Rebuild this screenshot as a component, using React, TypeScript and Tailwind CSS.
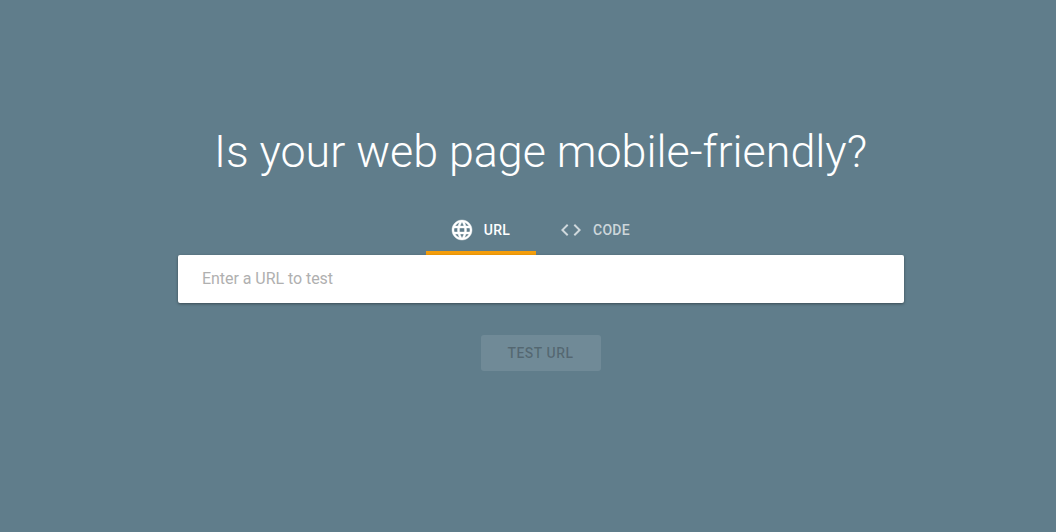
function GlobeIcon() {
  return (
    <svg viewBox="0 0 24 24" className="h-6 w-6 fill-white stroke-white stroke-[0.4]">
      <path d="M11.99 2C6.47 2 2 6.48 2 12s4.47 10 9.99 10C17.52 22 22 17.52 22 12S17.52 2 11.99 2zm6.93 6h-2.95c-.32-1.25-.78-2.45-1.38-3.56 1.84.63 3.37 1.91 4.33 3.56zM12 4.04c.83 1.2 1.48 2.53 1.91 3.96h-3.82c.43-1.43 1.08-2.76 1.91-3.96zM4.26 14C4.1 13.36 4 12.69 4 12s.1-1.36.26-2h3.38c-.08.66-.14 1.32-.14 2s.06 1.34.14 2H4.26zm.82 2h2.95c.32 1.25.78 2.45 1.38 3.56-1.84-.63-3.37-1.9-4.33-3.56zm2.95-8H5.08c.96-1.66 2.49-2.93 4.33-3.56C8.81 5.55 8.35 6.75 8.03 8zM12 19.96c-.83-1.2-1.48-2.53-1.91-3.96h3.82c-.43 1.43-1.08 2.76-1.91 3.96zM14.34 14H9.66c-.09-.66-.16-1.32-.16-2s.07-1.35.16-2h4.68c.09.65.16 1.32.16 2s-.07 1.34-.16 2zm.25 5.56c.6-1.11 1.06-2.31 1.38-3.56h2.95c-.96 1.65-2.49 2.93-4.33 3.56zM16.36 14c.08-.66.14-1.32.14-2s-.06-1.34-.14-2h3.38c.16.64.26 1.31.26 2s-.1 1.36-.26 2h-3.38z" />
    </svg>
  )
}

function CodeIcon() {
  return (
    <svg viewBox="0 0 24 24" className="h-6 w-6 fill-white/70">
      <path d="M9.4 16.6L4.8 12l4.6-4.6L8 6l-6 6 6 6 1.4-1.4zm5.2 0l4.6-4.6-4.6-4.6L16 6l6 6-6 6-1.4-1.4z" />
    </svg>
  )
}

export default function App() {
  return (
    <div className="h-[532px] w-full overflow-hidden bg-[#607d8b] pl-[26px] font-['Roboto',sans-serif]">
      <div className="flex flex-col items-center pt-[122px]">
        <h1 className="pr-[1px] text-[44.8px] leading-[60px] font-light text-white">Is your web page mobile-friendly?</h1>

        <div className="mt-[25px] flex h-12">
          <div className="flex w-[110px] items-center justify-center gap-[10px] border-b-4 border-[#f59e0b] pt-[2px] pr-[2px] text-sm font-medium tracking-[0.3px] text-white">
            <GlobeIcon />
            <span>URL</span>
          </div>
          <div className="flex w-[120px] items-center justify-center gap-[10px] border-b-4 border-transparent pt-[2px] pr-[3px] text-sm font-medium tracking-[0.3px] text-white/70">
            <CodeIcon />
            <span>CODE</span>
          </div>
        </div>

        <div className="flex h-12 w-[726px] items-center rounded-[2px] bg-white px-6 shadow-[0_1px_3px_rgba(0,0,0,0.4)]">
          <span className="text-base tracking-[-0.05px] text-[#b0b0b0]">Enter a URL to test</span>
        </div>

        <div className="mt-8 flex h-9 w-[120px] items-center justify-center rounded-[3px] bg-white/10 pr-[1px] pb-[1px] text-sm font-medium tracking-[0.5px] text-black/25">
          TEST URL
        </div>
      </div>
    </div>
  )
}
